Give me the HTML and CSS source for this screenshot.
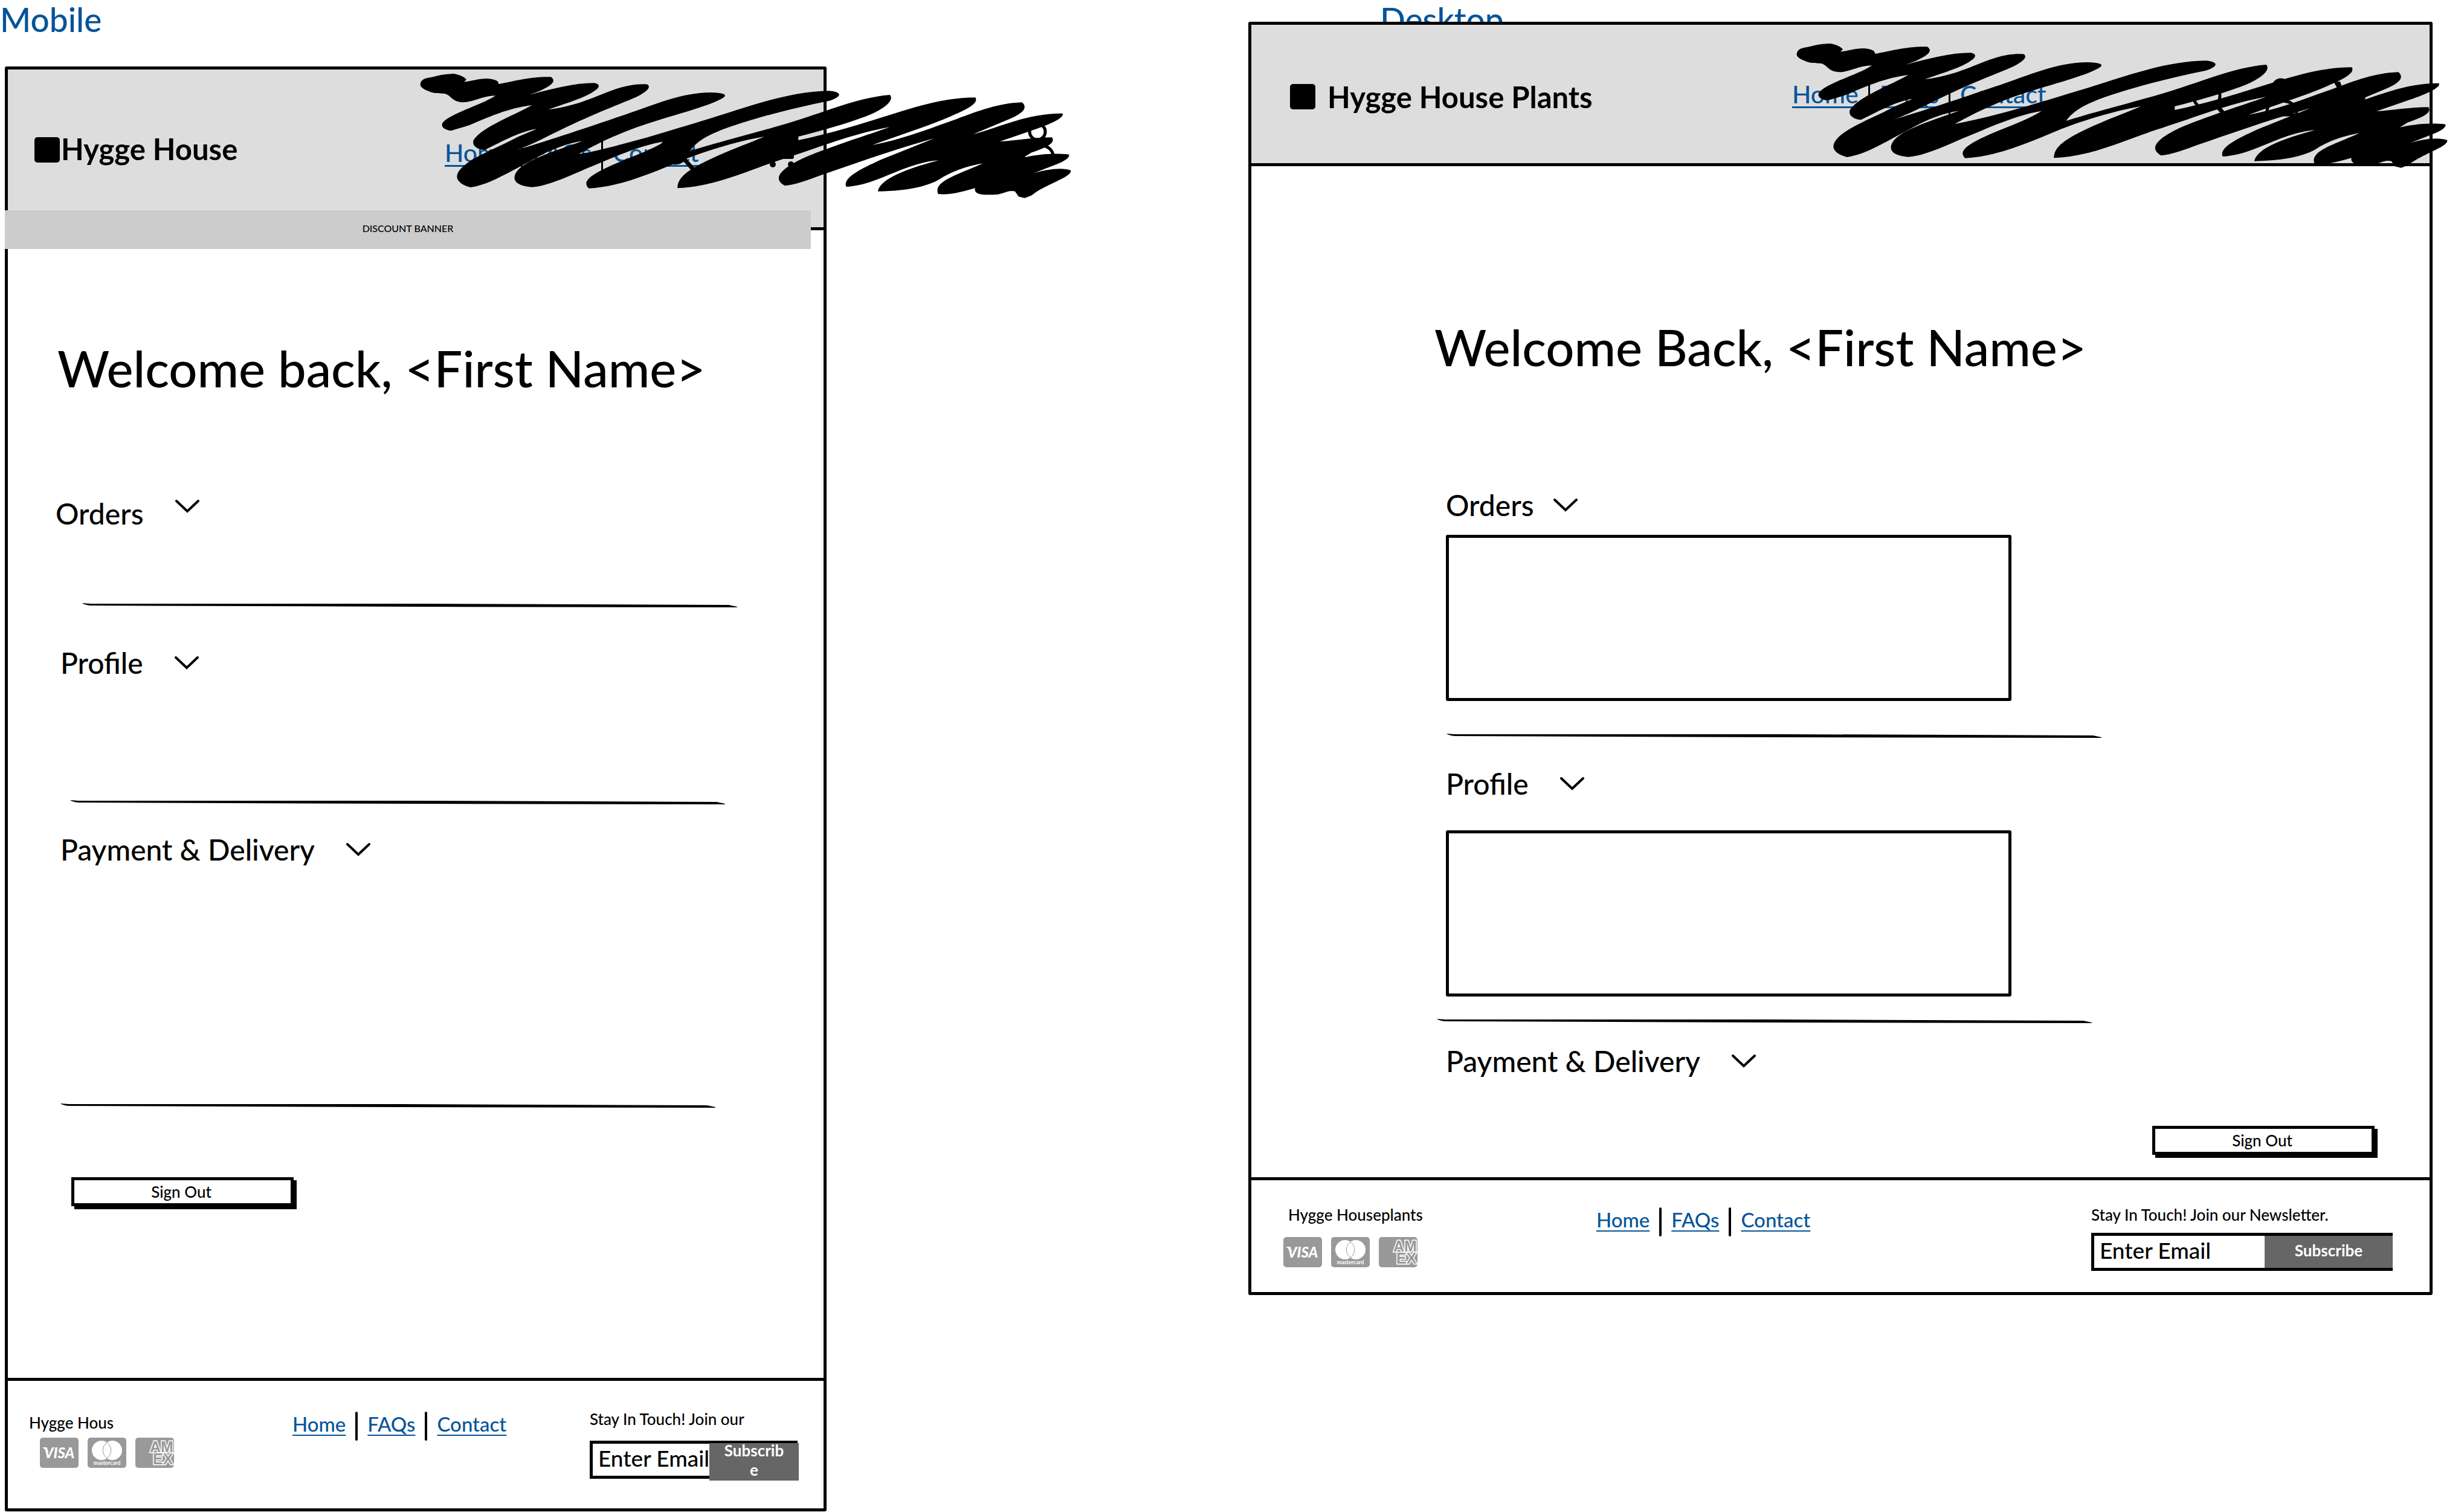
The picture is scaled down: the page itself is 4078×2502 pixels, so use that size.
FILE: index.html
```html
<!DOCTYPE html>
<html lang="en">
<head>
<meta charset="utf-8">
<meta name="viewport" content="width=device-width, initial-scale=1">
<title>Hygge House Plants – Account wireframes</title>
<link rel="stylesheet" href="styles.css">
</head>
<body>

<!-- Shared drawings -->
<svg class="sprite" aria-hidden="true">
  <symbol id="chevron" viewBox="0 0 40 22">
    <path d="M2 2 L20 19 L38 2" fill="none" stroke="#000" stroke-width="4" stroke-linecap="round"/>
  </symbol>
  <symbol id="rule" viewBox="0 0 1084 8" preserveAspectRatio="none">
    <path d="M0 0 L14 1 L560 1 L1070 3 L1084 6 L1084 7 L1068 7 L560 6 L14 4 Q4 3 0 0Z" fill="#000"/>
  </symbol>
  <symbol id="search" viewBox="0 0 60 64">
    <circle cx="26" cy="28" r="22" fill="none" stroke="#000" stroke-width="5"/>
    <path d="M41 43 L57 61" stroke="#000" stroke-width="7"/>
  </symbol>
  <symbol id="cart" viewBox="0 0 60 60">
    <path d="M0 5h11l3 9h44l-7 24H19z" fill="#000"/>
    <path d="M12 40h36" stroke="#000" stroke-width="6" stroke-linecap="round"/>
    <circle cx="16" cy="52" r="5"/><circle cx="46" cy="52" r="5"/>
  </symbol>
  <symbol id="user" viewBox="0 0 56 64">
    <circle cx="26" cy="16" r="13" fill="none" stroke="#000" stroke-width="5"/>
    <path d="M3 61 V54 Q5 38 26 38 Q48 38 52 54 V61Z" fill="none" stroke="#000" stroke-width="5"/>
  </symbol>
  <symbol id="scribble" viewBox="0 0 1078 206">
    <g transform="scale(.7274 .3333) translate(-48 -66)">
      <path d="M49 117C50 100 56 90 70 85C85 80 95 68 125 66C140 72 150 82 154 96L148 106C165 104 180 90 200 90C218 92 227 100 227 117C262 105 295 80 346 82C358 100 352 122 320 152L297 171C350 140 400 112 445 112C462 120 456 140 435 165C410 195 370 220 340 244C410 225 450 175 490 145C520 122 545 115 566 119C578 140 550 175 520 200C440 270 400 310 340 375Q300 420 270 443C330 405 420 340 500 280C580 222 640 160 710 159C735 160 748 168 740 182C715 220 640 262 590 297C530 335 470 390 408 466C500 428 600 360 690 300C790 235 880 155 980 151C1010 158 1008 180 980 200C900 235 820 280 760 325C710 362 680 395 662 450C720 410 810 360 880 315C960 265 1040 185 1117 171C1128 195 1108 240 1060 280C1010 320 960 350 909 378V396C980 365 1060 310 1130 262C1190 220 1250 184 1312 184C1320 215 1290 245 1255 278C1200 330 1140 370 1077 420C1150 390 1210 335 1270 290C1320 250 1365 212 1418 208C1432 235 1420 262 1390 290L1307 366C1370 330 1430 262 1510 263C1516 285 1480 320 1435 352L1368 402C1400 400 1440 382 1486 382C1496 410 1470 435 1440 457L1421 482C1450 470 1480 458 1525 467C1528 500 1480 525 1445 560C1475 540 1510 530 1529 546C1532 580 1470 615 1440 670L1424 683L1410 676L1402 650C1385 640 1375 668 1350 667C1325 668 1308 665 1311 634C1285 650 1255 670 1227 663C1215 600 1270 570 1329 511C1290 525 1255 555 1230 590C1195 635 1140 648 1090 650C1096 580 1170 530 1228 496C1170 505 1120 570 1070 605C1050 618 1035 625 1018 627C1008 580 1060 530 1100 490L1218 387C1130 440 1040 510 960 570C930 595 900 618 878 622C852 590 862 545 920 485C980 430 1060 375 1117 331C1030 365 960 430 880 485C800 540 720 628 634 634C634 590 650 555 690 510C735 460 780 425 832 378C770 400 690 455 640 500C580 555 500 630 432 635C415 600 440 565 480 525C520 485 570 450 606 401C550 420 490 480 440 525C390 570 340 625 302 629C270 622 260 600 264 570C275 500 350 455 418 400C350 425 310 490 260 545C225 585 195 620 163 630C138 615 128 590 134 560C150 490 220 440 270 380L314 340C270 355 225 415 195 445C175 440 166 420 170 395C190 330 260 275 303 222C250 235 200 285 160 322L119 349C100 342 95 325 100 308C120 260 190 220 220 175C190 175 170 208 146 208C120 205 120 175 105 165C90 162 80 166 65 150C54 140 48 130 49 117Z"/>
    </g>
  </symbol>
</svg>

<div class="canvas">

  <!-- Mobile frame -->
  <section class="artboard mobile">
    <p class="artboard-label">Mobile</p>
    <div class="frame">
      <header class="site-header">
        <div class="brand"><span class="brand-mark"></span><strong class="brand-name">Hygge House</strong></div>
        <nav class="links header-links">
          <a href="#">Home</a><span class="divider"></span><a href="#">FAQs</a><span class="divider"></span><a href="#">Contact</a>
        </nav>
        <svg class="scribble" viewBox="0 0 1078 206" aria-hidden="true">
          <use href="#search" x="396" y="98" width="60" height="64"/>
          <use href="#cart" x="568" y="98" width="60" height="60"/>
          <use href="#user" x="996" y="80" width="56" height="64"/>
          <use href="#scribble" width="1078" height="206"/>
        </svg>
      </header>
      <div class="discount">DISCOUNT BANNER</div>

      <main class="content">
        <h1 class="title">Welcome back, &lt;First Name&gt;</h1>
        <h2 class="section orders"><button class="toggle" type="button">Orders<svg class="chevron" aria-hidden="true"><use href="#chevron"/></svg></button></h2>
        <svg class="rule rule-orders" aria-hidden="true"><use href="#rule"/></svg>
        <h2 class="section profile"><button class="toggle" type="button">Profile<svg class="chevron" aria-hidden="true"><use href="#chevron"/></svg></button></h2>
        <svg class="rule rule-profile" aria-hidden="true"><use href="#rule"/></svg>
        <h2 class="section payment"><button class="toggle" type="button">Payment &amp; Delivery<svg class="chevron" aria-hidden="true"><use href="#chevron"/></svg></button></h2>
        <svg class="rule rule-payment" aria-hidden="true"><use href="#rule"/></svg>
        <button class="sign-out" type="button">Sign Out</button>
      </main>

      <footer class="site-footer">
        <div class="company">
          <p class="company-name">Hygge Hous</p>
          <div class="cards">
            <svg class="card" viewBox="0 0 64 50" role="img" aria-label="Visa">
              <text class="visa-text" x="32" y="34">VISA</text>
              <path d="M4 16h7l4 9z" fill="#fff"/>
            </svg>
            <svg class="card" viewBox="0 0 64 50" role="img" aria-label="Mastercard">
              <circle cx="23" cy="21" r="16" fill="#fff"/>
              <circle cx="41" cy="21" r="16" fill="#fff"/>
              <path d="M32 8a16 16 0 0 1 0 26a16 16 0 0 1 0-26z" fill="#fff" stroke="#999"/>
              <text class="mastercard-text" x="32" y="45">mastercard</text>
            </svg>
            <svg class="card" viewBox="0 0 64 50" role="img" aria-label="American Express">
              <text class="amex-text" x="24" y="24">AM</text>
              <text class="amex-text" x="29" y="44">EX</text>
            </svg>
          </div>
        </div>
        <nav class="links footer-links">
          <a href="#">Home</a><span class="divider"></span><a href="#">FAQs</a><span class="divider"></span><a href="#">Contact</a>
        </nav>
        <form class="newsletter">
          <label class="newsletter-label" for="email-mobile">Stay In Touch! Join our</label>
          <div class="newsletter-field">
            <input class="email" id="email-mobile" type="text" value="Enter Email">
            <button class="subscribe" type="button"><span>Subscribe</span></button>
          </div>
        </form>
      </footer>
    </div>
  </section>

  <!-- Desktop frame -->
  <section class="artboard desktop">
    <p class="artboard-label">Desktop</p>
    <div class="frame">
      <header class="site-header">
        <div class="brand"><span class="brand-mark"></span><strong class="brand-name">Hygge House Plants</strong></div>
        <nav class="links header-links">
          <a href="#">Home</a><span class="divider"></span><a href="#">FAQs</a><span class="divider"></span><a href="#">Contact</a>
        </nav>
        <svg class="scribble" viewBox="0 0 1078 206" aria-hidden="true">
          <use href="#search" x="653" y="58" width="60" height="64"/>
          <use href="#cart" x="889" y="58" width="60" height="60"/>
          <use href="#user" x="776" y="57" width="56" height="64"/>
          <use href="#scribble" width="1078" height="206"/>
        </svg>
      </header>

      <main class="content">
        <h1 class="title">Welcome Back, &lt;First Name&gt;</h1>
        <h2 class="section orders"><button class="toggle" type="button">Orders<svg class="chevron" aria-hidden="true"><use href="#chevron"/></svg></button></h2>
        <div class="panel panel-orders"></div>
        <svg class="rule rule-orders" aria-hidden="true"><use href="#rule"/></svg>
        <h2 class="section profile"><button class="toggle" type="button">Profile<svg class="chevron" aria-hidden="true"><use href="#chevron"/></svg></button></h2>
        <div class="panel panel-profile"></div>
        <svg class="rule rule-profile" aria-hidden="true"><use href="#rule"/></svg>
        <h2 class="section payment"><button class="toggle" type="button">Payment &amp; Delivery<svg class="chevron" aria-hidden="true"><use href="#chevron"/></svg></button></h2>
        <button class="sign-out" type="button">Sign Out</button>
      </main>

      <footer class="site-footer">
        <div class="company">
          <p class="company-name">Hygge Houseplants</p>
          <div class="cards">
            <svg class="card" viewBox="0 0 64 50" role="img" aria-label="Visa">
              <text class="visa-text" x="32" y="34">VISA</text>
              <path d="M4 16h7l4 9z" fill="#fff"/>
            </svg>
            <svg class="card" viewBox="0 0 64 50" role="img" aria-label="Mastercard">
              <circle cx="23" cy="21" r="16" fill="#fff"/>
              <circle cx="41" cy="21" r="16" fill="#fff"/>
              <path d="M32 8a16 16 0 0 1 0 26a16 16 0 0 1 0-26z" fill="#fff" stroke="#999"/>
              <text class="mastercard-text" x="32" y="45">mastercard</text>
            </svg>
            <svg class="card" viewBox="0 0 64 50" role="img" aria-label="American Express">
              <text class="amex-text" x="24" y="24">AM</text>
              <text class="amex-text" x="29" y="44">EX</text>
            </svg>
          </div>
        </div>
        <nav class="links footer-links">
          <a href="#">Home</a><span class="divider"></span><a href="#">FAQs</a><span class="divider"></span><a href="#">Contact</a>
        </nav>
        <form class="newsletter">
          <label class="newsletter-label" for="email-desktop">Stay In Touch! Join our Newsletter.</label>
          <div class="newsletter-field">
            <input class="email" id="email-desktop" type="text" value="Enter Email">
            <button class="subscribe" type="button"><span>Subscribe</span></button>
          </div>
        </form>
      </footer>
    </div>
  </section>

</div>
</body>
</html>
```
FILE: styles.css
```css
* { box-sizing: border-box; }

body {
  margin: 0;
  background: #fff;
  color: #000;
  font-family: Lato, "Open Sans", sans-serif;
  font-weight: 500;
}

h1, h2, p { margin: 0; font-weight: inherit; }

button, input {
  font-family: inherit;
  font-weight: inherit;
  color: inherit;
}

.sprite { position: absolute; width: 0; height: 0; }

/* Two artboards side by side */
.canvas {
  display: grid;
  grid-template-columns: 1360fr 1960fr;
  column-gap: 698px;
  align-items: start;
  padding: 0 52px 0 8px;
}

.artboard-label {
  font-size: 55px;
  line-height: 64px;
  color: #04549a;
}

.frame {
  position: relative;
  display: flex;
  flex-direction: column;
  background: #fff;
  border: 5px solid #000;
  border-radius: 3px;
}

/* Header */
.site-header {
  position: relative;
  display: grid;
  background: #ddd;
  border-bottom: 5px solid #000;
}

.brand { display: flex; }

.brand-mark {
  width: 42px;
  height: 42px;
  border-radius: 5px;
  background: #000;
}

.brand-name {
  font-size: 49px;
  font-weight: 700;
  white-space: nowrap;
}

.links { display: flex; align-items: flex-start; }

.links a {
  color: #04549a;
  text-decoration: underline;
  text-decoration-thickness: 2px;
  text-decoration-skip-ink: none;
  text-underline-offset: 5px;
}

.divider { background: #000; border-radius: 2px; }

.header-links {
  gap: 16px;
  font-size: 41px;
  line-height: 52px;
}
.header-links a { text-decoration-thickness: 3px; }
.header-links .divider { width: 3px; height: 60px; }

.footer-links {
  gap: 16px;
  font-size: 33px;
  line-height: 40px;
}
.footer-links .divider { width: 4px; height: 48px; }

.scribble {
  position: absolute;
  z-index: 2;
  width: 1078px;
  height: 206px;
}

.discount {
  z-index: 1;
  padding: 18px 0 22px;
  background: #ccc;
  font-size: 16px;
  line-height: 24px;
  text-align: center;
}

/* Account sections */
.content {
  display: flex;
  flex-direction: column;
  align-items: flex-start;
}

.title {
  font-size: 83px;
  line-height: 96px;
  white-space: nowrap;
}

.toggle {
  display: flex;
  align-items: center;
  gap: 52px;
  padding: 0;
  border: 0;
  background: none;
  font-size: 48px;
  line-height: 56px;
}

.chevron { width: 40px; height: 22px; }

.rule { width: 1084px; height: 8px; }

.panel {
  width: 936px;
  height: 275px;
  border: 5px solid #000;
  border-radius: 3px;
}

.sign-out {
  width: 368px;
  height: 48px;
  padding: 0 4px 0 0;
  border: 5px solid #000;
  background: #fff;
  box-shadow: 5px 5px 0 #000;
  font-size: 26px;
  line-height: 32px;
}

/* Footer */
.site-footer {
  display: grid;
  align-items: start;
  border-top: 5px solid #000;
}

.company-name,
.newsletter-label {
  display: block;
  font-size: 26px;
  line-height: 32px;
  white-space: nowrap;
}

.cards { display: flex; gap: 15px; }

.card {
  width: 64px;
  height: 50px;
  border-radius: 5px;
  background: #999;
}

.visa-text {
  fill: #fff;
  font-size: 24px;
  font-weight: 900;
  font-style: italic;
  text-anchor: middle;
}

.mastercard-text {
  fill: #fff;
  font-size: 9px;
  font-weight: 700;
  text-anchor: middle;
}

.amex-text {
  fill: #999;
  stroke: #fff;
  stroke-width: 3px;
  paint-order: stroke;
  font-family: "Liberation Sans", sans-serif;
  font-size: 25px;
  font-weight: 700;
}

.newsletter-field {
  display: flex;
  height: 63px;
  border: 5px solid #000;
}

.email {
  flex: 1;
  min-width: 0;
  padding: 0 0 6px 9px;
  border: 0;
  background: none;
  font-size: 37px;
}

.subscribe {
  display: flex;
  flex: none;
  align-items: center;
  justify-content: center;
  padding: 0 20px 6px;
  border: 0;
  background: #666;
  color: #fff;
  font-size: 26px;
  font-weight: 700;
  line-height: 32px;
}

/* Mobile artboard */
.mobile .artboard-label { padding-bottom: 46px; margin-left: -8px; box-sizing: content-box; }

.mobile .site-header {
  grid-template-columns: 679fr 627fr;
  padding: 112px 0 89px 44px;
}
.mobile .brand { gap: 2px; }
.mobile .brand-name { line-height: 38px; }
.mobile .scribble { left: 682px; top: 7px; }
.mobile .discount { margin: -33px 21px 0 -5px; }

.mobile .content { padding: 149px 0 284px 79px; }
.mobile .title { margin-left: 3px; }
.mobile .orders { margin-top: 165px; }
.mobile .orders .chevron { margin-bottom: 24px; }
.mobile .rule-orders { margin: 120px 0 63px 44px; }
.mobile .profile,
.mobile .payment { margin-left: 8px; }
.mobile .rule-profile { margin: 199px 0 46px 24px; }
.mobile .rule-payment { margin: 392px 0 114px 8px; }
.mobile .sign-out { margin-left: 26px; }

.mobile .site-footer {
  grid-template-columns: 438fr 492fr 387fr;
  padding: 47px 0 49px 33px;
}
.mobile .company { padding-top: 6px; }
.mobile .company-name { padding-left: 2px; }
.mobile .cards { padding: 9px 0 0 20px; }
.mobile .footer-links { padding-top: 4px; }
.mobile .newsletter-field { width: 344px; margin-top: 20px; }
.mobile .subscribe {
  width: 148px;
  margin: -1px -7px -8px 0;
  word-break: break-all;
}

/* Desktop artboard */
.desktop .artboard-label { padding-left: 218px; }
.desktop .frame { margin-top: -28px; }

.desktop .site-header {
  grid-template-columns: 831fr 1055fr;
  align-items: center;
  padding: 89px 0 80px 64px;
}
.desktop .brand { align-items: center; gap: 20px; }
.desktop .brand-name { line-height: 56px; }
.desktop .scribble { left: 902px; top: 31px; }

.desktop .content { padding: 251px 0 37px 303px; }
.desktop .section,
.desktop .panel { margin-left: 19px; }
.desktop .orders { margin-top: 186px; }
.desktop .orders .toggle { gap: 32px; }
.desktop .panel-orders { margin-top: 21px; }
.desktop .rule-orders { margin: 54px 0 47px 20px; }
.desktop .panel-profile { margin-top: 49px; }
.desktop .rule-profile { margin: 37px 0 34px 4px; }
.desktop .sign-out {
  align-self: flex-end;
  margin: 79px 91px 0 0;
}

.desktop .site-footer {
  grid-template-columns: 518fr 819fr 560fr;
  padding: 41px 0 35px 53px;
}
.desktop .company-name { padding-left: 8px; }
.desktop .cards { padding-top: 21px; }
.desktop .footer-links { padding-top: 4px; }
.desktop .newsletter-field { width: 499px; margin-top: 14px; }
.desktop .subscribe { width: 212px; margin-right: -5px; }
```
